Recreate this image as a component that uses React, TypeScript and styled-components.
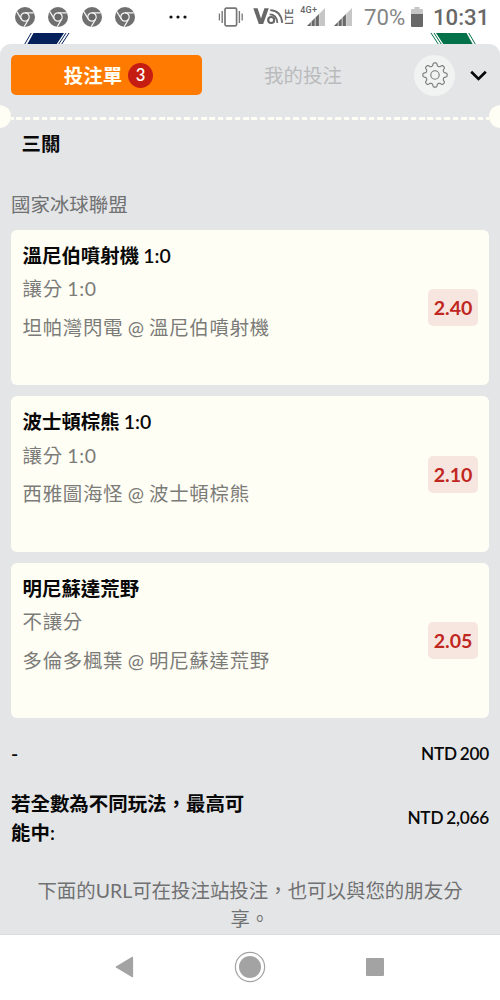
import React from 'react';
import styled, { createGlobalStyle } from 'styled-components';

const GlobalStyle = createGlobalStyle`
  * { box-sizing: border-box; }
  body {
    margin: 0;
    background: #fff;
    font-family: Lato, "Noto Sans CJK TC", sans-serif;
    font-size: 19.44px;
    color: #080808;
  }
`;

const Screen = styled.div`
  width: 500px;
  height: 1000px;
  overflow: hidden;
  display: flex;
  flex-direction: column;
  background: #fff;
`;

const StatusBar = styled.header`
  height: 33px;
  flex: none;
  display: flex;
  align-items: center;
  padding: 0 12px 0 15px;
  color: #686868;
  font-family: Roboto, sans-serif;
`;

const Notifications = styled.div`
  display: flex;
  gap: 13.3px;
  svg { display: block; }
`;

const More = styled.svg`
  margin-left: 33px;
  display: block;
`;

const System = styled.div`
  flex: 1;
  display: flex;
  align-items: center;
  justify-content: flex-end;
  svg { display: block; flex: none; }
`;

const Gap = styled.i<{ $w: number }>`
  width: ${p => p.$w}px;
  flex: none;
`;

const Battery = styled.span`
  font-size: 22.2px;
  line-height: 30px;
  color: #858585;
  width: 41px;
  white-space: nowrap;
  margin: 1px 6px 0 12px;
`;

const Clock = styled.span`
  font-size: 22.2px;
  font-weight: 500;
  line-height: 30px;
  width: 55px;
  white-space: nowrap;
  margin: 1px 0 0 10px;
`;

const Backdrop = styled.div`
  height: 11px;
  flex: none;
  display: flex;
  justify-content: space-between;
  padding: 0 24px;
  svg { display: block; }
`;

const Sheet = styled.main`
  flex: none;
  height: 891px;
  background: #e4e5e7;
  border-radius: 11px 11px 0 0;
  border-bottom: 1px solid #dcdddd;
  overflow: hidden;
`;

const Tabs = styled.nav`
  height: 61px;
  display: flex;
  align-items: center;
  padding: 1px 11px 0;
`;

const Tab = styled.button<{ $active?: boolean }>`
  width: ${p => (p.$active ? 191 : 202)}px;
  height: 40px;
  border: 0;
  border-radius: 5px;
  padding: ${p => (p.$active ? '0 0 0 4px' : '1px 0 0')};
  display: flex;
  align-items: center;
  justify-content: center;
  gap: 6px;
  background: ${p => (p.$active ? '#ff7a00' : 'transparent')};
  color: ${p => (p.$active ? '#fffef5' : '#babbbd')};
  font: ${p => (p.$active ? 700 : 400)} 19.44px/26px Lato, "Noto Sans CJK TC", sans-serif;
`;

const TabLabel = styled.span`
  padding-top: 1px;
`;

const Count = styled.span`
  width: 25px;
  height: 25px;
  border-radius: 50%;
  background: #c61d12;
  font-size: 16.6px;
  font-weight: 600;
  line-height: 25px;
  text-align: center;
`;

const GearButton = styled.button`
  width: 41px;
  height: 41px;
  border: 0;
  padding: 0;
  border-radius: 50%;
  background: #f1f3f3;
  display: grid;
  place-items: center;
  margin: 0 15px 0 10px;
`;

const TearLine = styled.div`
  height: 23px;
  display: flex;
  align-items: center;
  justify-content: space-between;
  overflow: hidden;
`;

const Notch = styled.i<{ $right?: boolean }>`
  width: 23px;
  height: 23px;
  flex: none;
  border-radius: 50%;
  background: #fffef5;
  margin: ${p => (p.$right ? '0 -12px 0 0' : '0 0 0 -12px')};
`;

const Dashes = styled.i`
  flex: 1;
  height: 3px;
  margin-top: 3px;
  background: repeating-linear-gradient(90deg, #fffef5 0 5.6px, transparent 5.6px 8.39px);
  background-position: -2.9px 0;
`;

const ParlayTitle = styled.h2`
  margin: 0;
  padding-left: 21.5px;
  height: 32px;
  line-height: 32px;
  font-size: 19.44px;
  font-weight: 700;
`;

const League = styled.div`
  margin-top: 28px;
  padding-left: 11px;
  height: 32px;
  line-height: 33px;
  font-weight: 400;
  color: #707172;
`;

const Slips = styled.section`
  display: flex;
  flex-direction: column;
  gap: 11.1px;
  padding: 9.5px 11px 0;
`;

const Slip = styled.article`
  height: 155.5px;
  border-radius: 6px;
  background: #fffef5;
  display: flex;
  justify-content: space-between;
  padding: 0 11px 0 11.5px;
`;

const SlipTitle = styled.h3`
  margin: 11px 0 0;
  height: 30px;
  line-height: 30px;
  font-size: 19.44px;
  font-weight: 600;
  word-spacing: -0.8px;
`;

const Detail = styled.p<{ $match?: boolean }>`
  margin: ${p => (p.$match ? 8.5 : 3.7)}px 0 0;
  height: 30px;
  line-height: 30px;
  font-weight: 400;
  letter-spacing: 0.7px;
  word-spacing: -1.2px;
  color: #7b7b78;
`;

const Odds = styled.strong`
  width: 50px;
  height: 37px;
  margin-top: 59.7px;
  border-radius: 5px;
  background: #f7e6df;
  color: #c0281f;
  text-align: center;
  line-height: 37px;
  font-size: 19.6px;
  font-weight: 700;
`;

const TotalRow = styled.div<{ $tall?: boolean }>`
  display: flex;
  align-items: center;
  justify-content: space-between;
  padding: 0 11px;
  height: ${p => (p.$tall ? 58 : 30)}px;
  margin-top: ${p => (p.$tall ? 20.5 : 21)}px;
  font-weight: 600;
  line-height: 28.5px;
`;

const TotalLabel = styled.span`
  width: 250px;
`;

const Amount = styled.span`
  font-size: 17.2px;
  letter-spacing: -0.2px;
  word-spacing: -1.2px;
`;

const Note = styled.p`
  margin: 29px 35px 0;
  text-align: center;
  font-weight: 400;
  line-height: 28.5px;
  color: #707172;
`;

const NavBar = styled.footer`
  flex: 1;
  display: flex;
  align-items: center;
  justify-content: space-between;
  padding: 0 116px 2px 115px;
  svg { display: block; }
`;

const Chrome = () => (
  <svg width="20" height="20" viewBox="0 0 20 20">
    <circle cx="10" cy="10" r="10" fill="#707070" />
    <circle cx="10" cy="10" r="4.2" fill="#686868" stroke="#f4f4f4" strokeWidth="1.2" />
    <path d="M10 5.8H18.8M6.4 12.1L1.8 4.6M13.6 12.1L9.2 19.8" stroke="#f4f4f4" strokeWidth="1.2" />
  </svg>
);

const Vibrate = () => (
  <svg width="26" height="20" viewBox="0 0 26 20" fill="none" stroke="#777">
    <rect x="7" y="1.2" width="11.6" height="17.6" rx="1.3" strokeWidth="1.7" />
    <path d="M4.2 4V16M21.4 4V16" strokeWidth="1.4" />
    <path d="M1.4 6.5V13.5M24.2 6.5V13.5" strokeWidth="1.3" />
  </svg>
);

const VoLte = () => (
  <svg width="42" height="20" viewBox="0 0 42 20">
    <path d="M.3 1.2H4.6L8 11.4L11.4 1.2H15.8L10.2 17H5.8Z" fill="#686868" />
    <circle cx="18.2" cy="13" r="3" fill="none" stroke="#686868" strokeWidth="2.2" />
    <path d="M16.6 7.4Q23.6 7.4 24.4 15.8M17.2 3.2Q28 3.6 29.2 15.8" fill="none" stroke="#686868" strokeWidth="1.8" />
    <text transform="translate(40.4 17.8) rotate(-90)" fontFamily="Roboto" fontWeight="500" fontSize="10.2" textLength="16" lengthAdjust="spacingAndGlyphs" fill="#686868">LTE</text>
  </svg>
);

const Signal = ({ label }: { label?: string }) => (
  <svg width={label ? 25 : 18} height="22" viewBox={label ? '0 0 25 22' : '7 0 18 22'}>
    <path d="M7 20L25 2V20Z" fill="#c6c6c6" />
    <path d="M7 20L19.6 7.4V20Z" fill="#686868" />
    <path d="M11.2 14V20M15.2 10V20M19.4 6V20" stroke="#ededed" strokeWidth=".8" />
    {label && <rect width="17.4" height="8.5" fill="#fff" />}
    {label && <text x=".2" y="7" fontFamily="Roboto" fontWeight="500" fontSize="9" textLength="16.8" fill="#686868">{label}</text>}
  </svg>
);

const BatteryIcon = () => (
  <svg width="12" height="20" viewBox="0 0 12 20">
    <path d="M3.5 0H8.5V2H11Q12 2 12 3V7H0V3Q0 2 1 2H3.5Z" fill="#c6c6c6" />
    <path d="M0 7H12V19Q12 20 11 20H1Q0 20 0 19Z" fill="#686868" />
  </svg>
);

const Stripe = ({ color, flip }: { color: string; flip?: boolean }) => (
  <svg width="46" height="11" viewBox="0 0 46 11">
    <g transform={flip ? 'translate(46 0) scale(-1 1)' : undefined}>
      <path d="M9.5 0H40L32.8 11H3.4Z" fill={color} />
      <path d="M7.2 0L.8 11M42 0L34.8 11M45 0L37.8 11" stroke={color} strokeWidth="1" />
    </g>
  </svg>
);

// Outline of an eight-toothed gear, sampled around its centre.
const gearPath = (() => {
  const points: string[] = [];
  for (let i = 0; i < 128; i++) {
    const a = (i / 128) * Math.PI * 2;
    const wave = Math.tanh(2.4 * Math.cos(8 * a)) / Math.tanh(2.4);
    const r = 10.7 + 1.45 * wave;
    points.push(`${(13 + r * Math.cos(a)).toFixed(2)} ${(13 + r * Math.sin(a)).toFixed(2)}`);
  }
  return `M${points.join('L')}Z`;
})();

const Gear = () => (
  <svg width="26" height="26" viewBox="0 0 26 26" fill="none" stroke="#777879" strokeWidth="1.1" strokeLinejoin="round">
    <path d={gearPath} />
    <circle cx="13" cy="13" r="4.2" />
  </svg>
);

const slips = [
  { title: '溫尼伯噴射機 1:0', market: '讓分 1:0', match: '坦帕灣閃電 @ 溫尼伯噴射機', odds: '2.40' },
  { title: '波士頓棕熊 1:0', market: '讓分 1:0', match: '西雅圖海怪 @ 波士頓棕熊', odds: '2.10' },
  { title: '明尼蘇達荒野', market: '不讓分', match: '多倫多楓葉 @ 明尼蘇達荒野', odds: '2.05' },
];

export default function App() {
  return (
    <Screen>
      <GlobalStyle />
      <StatusBar>
        <Notifications>
          {[0, 1, 2, 3].map(i => <Chrome key={i} />)}
        </Notifications>
        <More width="20" height="4" viewBox="0 0 20 4">
          <circle cx="3" cy="2" r="1.6" fill="#111" />
          <circle cx="10" cy="2" r="1.6" fill="#111" />
          <circle cx="17" cy="2" r="1.6" fill="#111" />
        </More>
        <System>
          <Vibrate />
          <Gap $w={9} />
          <VoLte />
          <Gap $w={5} />
          <Signal label="4G+" />
          <Gap $w={9} />
          <Signal />
          <Battery>70%</Battery>
          <BatteryIcon />
          <Clock>10:31</Clock>
        </System>
      </StatusBar>
      <Backdrop>
        <Stripe color="#04215c" />
        <Stripe color="#03724a" flip />
      </Backdrop>
      <Sheet>
        <Tabs>
          <Tab $active><TabLabel>投注單</TabLabel><Count>3</Count></Tab>
          <Tab>我的投注</Tab>
          <GearButton aria-label="設定"><Gear /></GearButton>
          <svg width="17" height="11" viewBox="0 0 17 11" fill="none" stroke="#080808" strokeWidth="2.7">
            <path d="M1.2 1.8L8.5 8.9L15.8 1.8" />
          </svg>
        </Tabs>
        <TearLine><Notch /><Dashes /><Notch $right /></TearLine>
        <ParlayTitle>三關</ParlayTitle>
        <League>國家冰球聯盟</League>
        <Slips>
          {slips.map(s => (
            <Slip key={s.title}>
              <div>
                <SlipTitle>{s.title}</SlipTitle>
                <Detail>{s.market}</Detail>
                <Detail $match>{s.match}</Detail>
              </div>
              <Odds>{s.odds}</Odds>
            </Slip>
          ))}
        </Slips>
        <TotalRow><TotalLabel>-</TotalLabel><Amount>NTD 200</Amount></TotalRow>
        <TotalRow $tall>
          <TotalLabel>若全數為不同玩法，最高可能中:</TotalLabel>
          <Amount>NTD 2,066</Amount>
        </TotalRow>
        <Note>下面的URL可在投注站投注，也可以與您的朋友分享。</Note>
      </Sheet>
      <NavBar>
        <svg width="19" height="22" viewBox="0 0 19 22">
          <path d="M1.2 11L17.5 1.3V20.7Z" fill="#a3a3a3" stroke="#a3a3a3" strokeWidth="1.2" strokeLinejoin="round" />
        </svg>
        <svg width="32" height="32" viewBox="0 0 32 32">
          <circle cx="16" cy="16" r="14.6" fill="none" stroke="#a3a3a3" strokeWidth="1.2" />
          <circle cx="16" cy="16" r="11" fill="#a3a3a3" />
        </svg>
        <svg width="18" height="18" viewBox="0 0 18 18">
          <rect width="18" height="18" rx="1" fill="#a3a3a3" />
        </svg>
      </NavBar>
    </Screen>
  );
}
